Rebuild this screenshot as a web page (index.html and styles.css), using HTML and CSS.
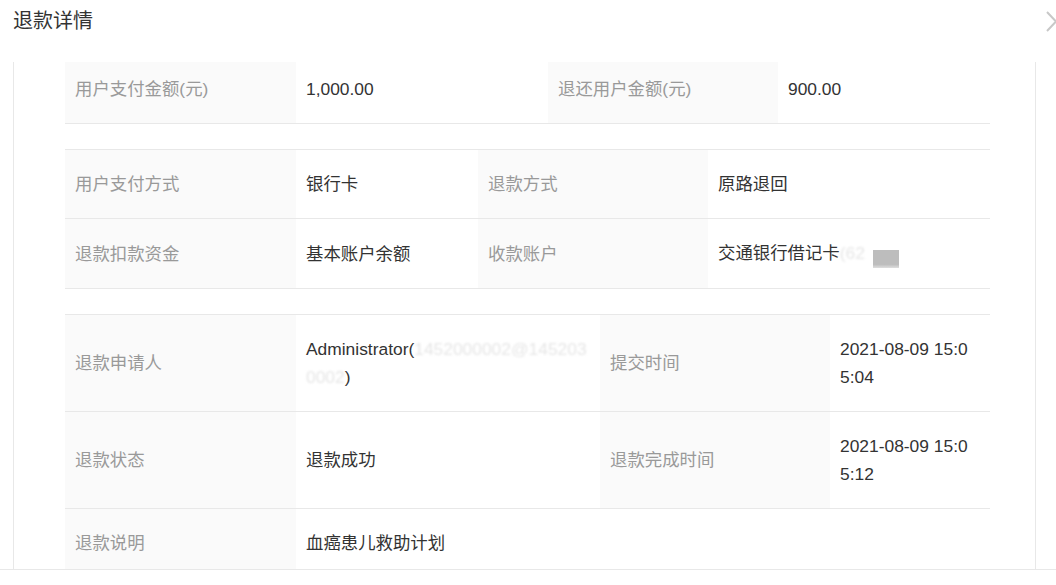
FILE: index.html
```html
<!DOCTYPE html>
<html lang="zh-CN">
<head>
<meta charset="utf-8">
<title>退款详情</title>
<link rel="stylesheet" href="styles.css">
</head>
<body>
<div class="header">
  <div class="title">退款详情</div>
  <svg class="chev" width="14" height="24" viewBox="0 0 14 24"><polyline points="2,2 11,11.5 2,21" fill="none" stroke="#c8c8c8" stroke-width="2"/></svg>
</div>
<div class="panel">
  <div class="content">
    <table class="sec">
      <colgroup><col class="c-l"><col class="c252"><col class="c-l2"><col class="c212"></colgroup>
      <tr>
        <td class="lab">用户支付金额(元)</td><td class="val">1,000.00</td>
        <td class="lab">退还用户金额(元)</td><td class="val">900.00</td>
      </tr>
    </table>
    <table class="sec">
      <colgroup><col class="c-l"><col class="c182"><col class="c-l2"><col class="c282"></colgroup>
      <tr>
        <td class="lab">用户支付方式</td><td class="val">银行卡</td>
        <td class="lab">退款方式</td><td class="val">原路退回</td>
      </tr>
      <tr>
        <td class="lab">退款扣款资金</td><td class="val">基本账户余额</td>
        <td class="lab">收款账户</td><td class="val">交通银行借记卡<span class="faint">(62</span><span class="mask"></span></td>
      </tr>
    </table>
    <table class="sec">
      <colgroup><col class="c-l"><col class="c304"><col class="c-l2"><col class="c160"></colgroup>
      <tr>
        <td class="lab">退款申请人</td><td class="val">Administrator(<span class="faint">1452000002@1452030002</span>)</td>
        <td class="lab">提交时间</td><td class="val narrow">2021-08-09 15:05:04</td>
      </tr>
      <tr>
        <td class="lab">退款状态</td><td class="val">退款成功</td>
        <td class="lab">退款完成时间</td><td class="val narrow">2021-08-09 15:05:12</td>
      </tr>
      <tr>
        <td class="lab">退款说明</td><td class="val" colspan="3">血癌患儿救助计划</td>
      </tr>
    </table>
  </div>
</div>
<div class="footer"></div>
</body>
</html>
```

FILE: styles.css
```css
html, body {
  margin: 0;
  padding: 0;
  background: #fff;
}
body {
  width: 1056px;
  height: 585px;
  overflow: hidden;
  font-family: "Liberation Sans", Arial, "Noto Sans CJK SC", sans-serif;
  color: #333;
}
.header {
  height: 62px;
  display: flex;
  justify-content: space-between;
  align-items: flex-start;
}
.title {
  margin: 7px 0 0 13px;
  font-size: 20px;
  line-height: 28px;
  color: #333;
}
.chev {
  margin-top: 10px;
  margin-right: -3px;
}
.panel {
  margin: 0 20px 0 13px;
  height: 507px;
  border-left: 1px solid #e8e8e8;
  border-right: 1px solid #e8e8e8;
  overflow: hidden;
  padding-left: 51px;
}
.content {
  margin-top: -8px;
  width: 925px;
}
.sec {
  width: 925px;
  table-layout: fixed;
  border-collapse: collapse;
  margin-bottom: 25px;
  border-top: 1px solid #e8e8e8;
}
.sec tr {
  border-bottom: 1px solid #e8e8e8;
}
.sec td {
  padding: 20px 10px;
  font-size: 17.4px;
  line-height: 28px;
  vertical-align: middle;
  word-break: break-all;
}
.c-l { width: 231px; }
.c-l2 { width: 230px; }
.c252 { width: 252px; }
.c212 { width: 212px; }
.c182 { width: 182px; }
.c282 { width: 282px; }
.c304 { width: 304px; }
.c160 { width: 160px; }
.lab {
  background: #fafafa;
  color: #999;
}
.val {
  background: #fff;
  color: #333;
}
.val.narrow {
  padding-right: 14px;
}
.faint {
  color: #e6e6e6;
  filter: blur(0.9px);
}
.mask {
  display: inline-block;
  width: 26px;
  height: 18px;
  margin-left: 8px;
  background: linear-gradient(#bdbdbd 0, #bdbdbd 80%, #dedede 100%);
  vertical-align: -9px;
}
.footer {
  border-top: 1px solid #e8e8e8;
  height: 15px;
}
```
